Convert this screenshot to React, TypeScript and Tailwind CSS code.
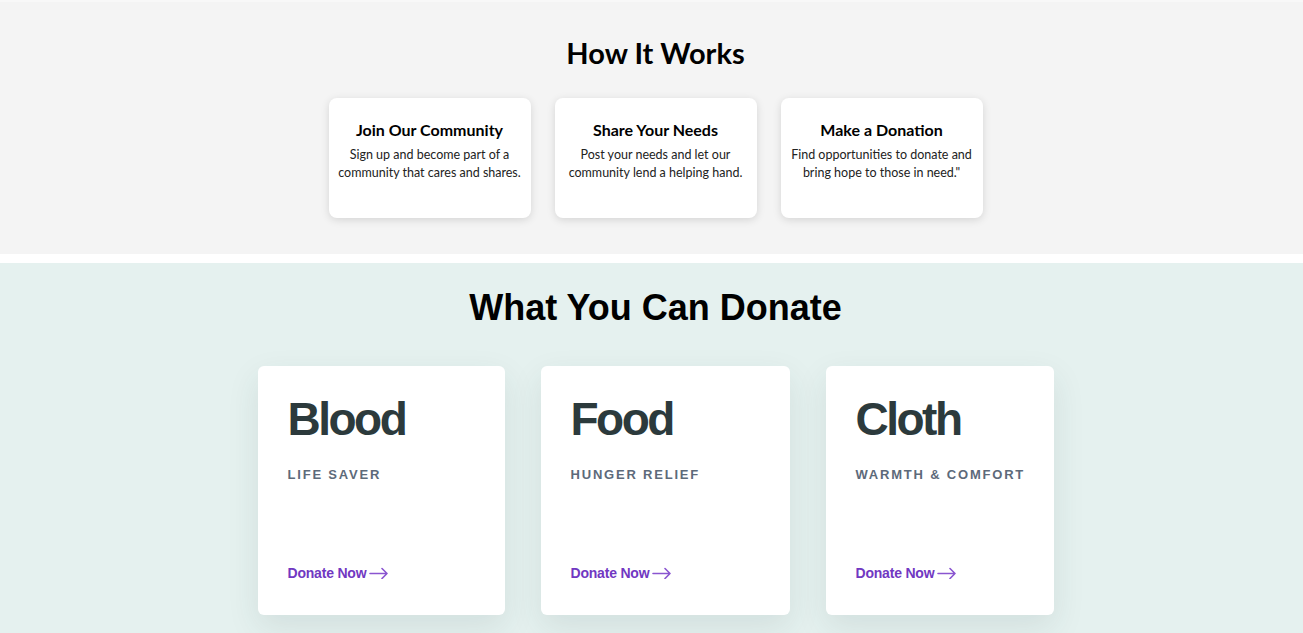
const steps = [
  { title: "Join Our Community", text: ["Sign up and become part of a", "community that cares and shares."] },
  { title: "Share Your Needs", text: ["Post your needs and let our", "community lend a helping hand."] },
  { title: "Make a Donation", text: ["Find opportunities to donate and", "bring hope to those in need.\""] },
];

const donations = [
  { name: "Blood", tag: "LIFE SAVER", width: "w-[247px]" },
  { name: "Food", tag: "HUNGER RELIEF", width: "w-[249px]" },
  { name: "Cloth", tag: "WARMTH & COMFORT", width: "w-[228px]" },
];

function Arrow() {
  return (
    <svg width="20" height="12" viewBox="0 0 20 12" fill="none" className="text-[#8a55d0]">
      <path d="M1 6.5h17M13 1.5l5 5-5 5" stroke="currentColor" strokeWidth="1.6" strokeLinecap="round" strokeLinejoin="round" />
    </svg>
  );
}

export default function App() {
  return (
    <div className="min-h-screen bg-white">
      {/* How it works */}
      <section className="bg-[#f4f4f4] border-t-2 border-[#f8f8f8] pt-[33px] pb-[36px] pl-2 font-['Lato',sans-serif]">
        <h2 className="text-center text-[29px] leading-9 font-bold text-black">How It Works</h2>
        <div className="mt-[27px] flex justify-center gap-6">
          {steps.map(s => (
            <div key={s.title} className="w-[202px] h-[120px] bg-white rounded-lg shadow-[0_2px_8px_rgba(0,0,0,0.13)] pt-5 text-center">
              <h3 className="text-[16px] leading-6 font-bold text-black">{s.title}</h3>
              <p className="mt-[4px] text-[12.5px] leading-[18px] text-[#222]">
                {s.text[0]}
                <br />
                {s.text[1]}
              </p>
            </div>
          ))}
        </div>
      </section>

      {/* What you can donate */}
      <section className="mt-[9px] bg-[#e5f1ef] pt-[25px] pb-[40px] pl-2 font-['Liberation_Sans',Arial,sans-serif]">
        <h2 className="text-center text-4xl leading-10 font-bold text-black">What You Can Donate</h2>
        <div className="mt-[38px] flex justify-center gap-9">
          {donations.map(d => (
            <div key={d.name} className={`${d.width} h-[249px] bg-white rounded-md shadow-[0_12px_32px_rgba(40,70,65,0.10)] px-[30px] pt-[30px] pb-[32px] flex flex-col`}>
              <h3 className="text-[46px] leading-[46px] font-bold tracking-[-2.5px] text-[#2c3a3c]">{d.name}</h3>
              <p className="mt-[23px] text-[13px] leading-5 font-bold tracking-[1.8px] text-[#5d6a7a] whitespace-nowrap">{d.tag}</p>
              <a href="#" className="mt-auto flex items-center gap-[3px] text-[14px] leading-5 font-bold tracking-[-0.2px] text-[#7138c2]">
                Donate Now
                <Arrow />
              </a>
            </div>
          ))}
        </div>
      </section>
    </div>
  );
}
